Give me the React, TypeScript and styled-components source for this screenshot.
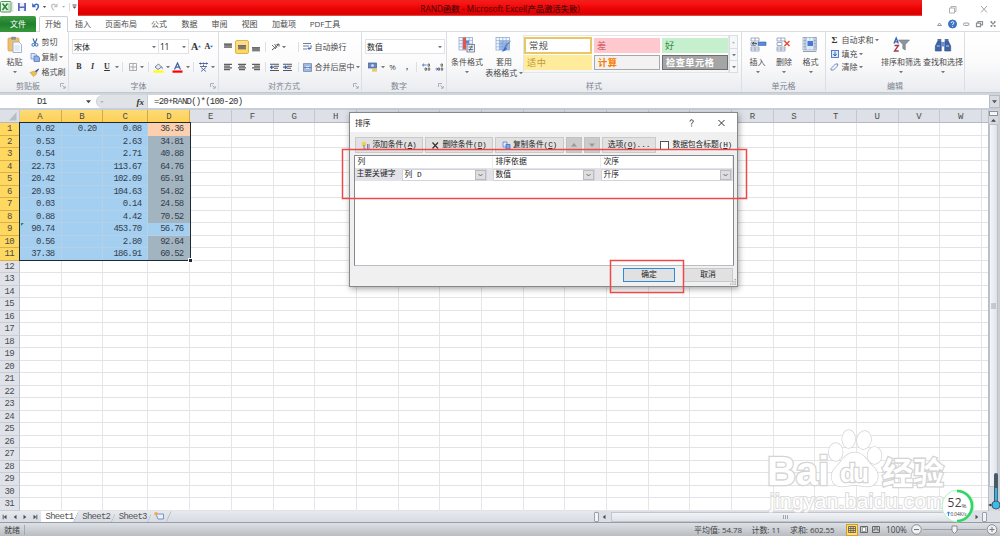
import React from "react";
import styled, { createGlobalStyle, css } from "styled-components";

const UI = '"Open Sans","Noto Sans CJK SC",sans-serif';
const MONO = '"Liberation Mono","Noto Sans CJK SC",monospace';

const Global = createGlobalStyle`
  *{box-sizing:border-box}
  html,body{margin:0;padding:0}
  body{width:1000px;height:536px;overflow:hidden;background:#fff;font:8px/10px ${UI};color:#4a4a4a}
  svg{display:block;flex:none}
`;

const Window = styled.div`
  position: relative;
  width: 1000px;
  height: 536px;
  overflow: hidden;
  display: flex;
  flex-direction: column;
  white-space: nowrap;
`;

/* ---------- title and tabs ---------- */
const TitleRow = styled.div`
  height: 16px;
  flex: none;
  display: flex;
  align-items: stretch;
`;
const QuickBar = styled.div`
  width: 78px;
  display: flex;
  align-items: center;
`;
const RedBar = styled.div`
  width: 844px;
  height: 16px;
  background: linear-gradient(#ee2020 0, #fa1414 20%, #e80404 55%, #dc0000 90%, #e96060);
  color: #4a0505;
  display: flex;
  align-items: center;
  justify-content: center;
  padding-top: 1px;
  font-size: 8.3px;
  font-weight: 500;
`;
const WinButtons = styled.div`
  flex: 1;
  padding-left: 27px;
  display: flex;
  align-items: flex-end;
  gap: 23px;
`;
const TabRow = styled.div`
  height: 16px;
  flex: none;
  display: flex;
  border-bottom: 1px solid #d9dce0;
`;
const FileTab = styled.div`
  width: 36px;
  height: 16px;
  border-radius: 1px 2px 0 0;
  background: linear-gradient(#3f9a45, #1f7f2c 50%, #37993b);
  color: #fff;
  text-align: center;
  line-height: 16px;
`;
const HomeTab = styled.div`
  width: 29px;
  margin-left: 2.5px;
  height: 16px;
  border: 1px solid #cdd1d6;
  border-bottom: 0;
  border-radius: 2px 2px 0 0;
  margin-bottom: -1px;
  background: #fff;
  text-align: center;
  line-height: 14px;
`;
const Tab = styled.div<{ $w: number }>`
  width: ${(p) => p.$w}px;
  text-align: center;
  line-height: 16px;
`;
const TabTools = styled.div`
  margin-left: auto;
  padding-right: 3px;
  display: flex;
  align-items: center;
`;

/* ---------- ribbon ---------- */
const Ribbon = styled.div`
  height: 61px;
  flex: none;
  display: flex;
  background: linear-gradient(#fff, #fbfbfc 50%, #e9ecef);
  border-bottom: 1px solid #c3c8ce;
`;
const Group = styled.div<{ $w: number }>`
  width: ${(p) => p.$w}px;
  height: 59px;
  flex: none;
  border-right: 1px solid #dbdee2;
  display: flex;
  flex-direction: column;
`;
const Body = styled.div<{ $pl?: number }>`
  height: 48px;
  display: flex;
  padding-left: ${(p) => p.$pl ?? 0}px;
`;
const Caption = styled.div<{ $shift?: number }>`
  height: 11px;
  display: grid;
  grid-template-columns: 12px 1fr 12px;
  align-items: center;
  text-align: center;
  color: #7b8390;
  & > span {
    grid-column: 2;
    transform: translateX(${(p) => p.$shift ?? 0}px);
  }
  & > svg {
    margin-left: 4px;
  }
`;
const BigButton = styled.div<{ $w: number }>`
  width: ${(p) => p.$w}px;
  flex: none;
  padding-top: 4px;
  display: flex;
  flex-direction: column;
  align-items: center;
  & > span {
    height: 10px;
    margin-top: 4px;
    line-height: 10px;
  }
  & > span + span {
    margin-top: 0.5px;
  }
`;
const ArrowSlot = styled.div`
  height: 9px;
  display: flex;
  align-items: center;
`;
const SmallList = styled.div<{ $step: number; $top: number; $w?: string }>`
  width: ${(p) => p.$w ?? "auto"};
  padding-top: ${(p) => p.$top}px;
  display: grid;
  grid-auto-rows: ${(p) => p.$step}px;
  align-items: center;
  align-content: start;
`;
const SmallItem = styled.div`
  display: flex;
  align-items: center;
  gap: 1.5px;
  line-height: 10px;
`;
const Rows = styled.div`
  display: flex;
  flex-direction: column;
  padding-top: 7px;
  gap: 5.5px;
`;
const ToolRow = styled.div`
  height: 15px;
  display: flex;
  align-items: center;
`;
const Slot = styled.div<{ $w: number; $on?: boolean }>`
  width: ${(p) => p.$w}px;
  height: 14px;
  flex: none;
  display: flex;
  align-items: center;
  justify-content: center;
  ${(p) =>
    p.$on &&
    css`
      background: linear-gradient(#fbe08a, #ffd657);
      border: 1px solid #dcb350;
      border-radius: 2px;
    `}
`;
const Divider = styled.i<{ $w: number }>`
  width: ${(p) => p.$w}px;
  height: 10px;
  flex: none;
  background: linear-gradient(#dcdfe3, #dcdfe3) center / 1px 100% no-repeat;
`;
const Glyph = styled.b<{ $size?: number; $italic?: boolean; $line?: boolean }>`
  font: ${(p) => (p.$italic ? "italic" : "normal")} 700 ${(p) => p.$size ?? 8}px/10px "Liberation Serif", serif;
  color: #333;
  text-decoration: ${(p) => (p.$line ? "underline" : "none")};
`;
const Combo = styled.div<{ $w: number }>`
  width: ${(p) => p.$w}px;
  height: 15px;
  flex: none;
  border: 1px solid #dfe2e6;
  background: #fff;
  color: #222;
  display: flex;
  align-items: center;
  justify-content: space-between;
  padding: 0 2px 0 1px;
  & + & {
    border-left: 0;
    letter-spacing: -0.3px;
    font-size: 8.5px;
  }
`;
const Gallery = styled.div`
  width: 206px;
  height: 38px;
  margin-top: 3px;
  border: 1px solid #e3e5e8;
  padding: 1px 0 0 0;
  display: grid;
  grid-template-columns: 68px 66px 66px;
  grid-template-rows: 17px 15px;
  column-gap: 2px;
  row-gap: 1px;
  align-items: center;
`;
const StyleCell = styled.div<{ $bg: string; $fg: string; $border?: string; $tall?: boolean; $bold?: boolean }>`
  height: ${(p) => (p.$tall ? 17 : 14.5)}px;
  background: ${(p) => p.$bg};
  color: ${(p) => p.$fg};
  border: ${(p) => (p.$border ? p.$border : "0 solid")};
  padding-left: 3px;
  display: flex;
  align-items: center;
  font-size: 9.2px;
  font-weight: ${(p) => (p.$bold ? 700 : 400)};
  letter-spacing: 0.5px;
`;
const GalleryScroll = styled.div`
  width: 9px;
  height: 38px;
  margin-top: 3px;
  display: grid;
  grid-template-rows: 1fr 1fr 1fr;
  border: 1px solid #dadde1;
  background: #f6f7f8;
  & > div {
    display: flex;
    align-items: center;
    justify-content: center;
  }
  & > div + div {
    border-top: 1px solid #dadde1;
  }
`;

/* ---------- formula bar ---------- */
const FormulaBar = styled.div`
  height: 17px;
  flex: none;
  display: flex;
  border-top: 2px solid #d0d5dc;
  border-bottom: 2px solid #c9ced6;
  background: #fff;
  font: 9px/14px ${MONO};
  color: #333;
`;
const NameBox = styled.div`
  width: 96px;
  display: flex;
  align-items: center;
  padding: 0 5px 0 37px;
  justify-content: space-between;
  letter-spacing: -0.6px;
`;
const FxBox = styled.div`
  width: 52px;
  display: flex;
  align-items: center;
  justify-content: space-between;
  background: #dfe2e7;
  border-radius: 7px 0 0 7px;
  border: 1px solid #c9cdd3;
  border-width: 0 1px 0 1px;
  padding: 0 3px 0 3px;
  font: italic 700 9px/12px "Liberation Serif", serif;
`;
const Formula = styled.div`
  flex: 1;
  padding-left: 6px;
  letter-spacing: -0.75px;
`;
const Expand = styled.div`
  width: 11px;
  background: #d8dce2;
  border: 1px solid #b7bcc4;
  display: flex;
  align-items: center;
  justify-content: center;
`;

/* ---------- sheet ---------- */
const Work = styled.div`
  height: 401px;
  flex: none;
  display: flex;
  overflow: hidden;
`;
const Sheet = styled.div`
  width: 988px;
  overflow: hidden;
`;
const columns = "19.5px 42px 41.8px 45px 42.2px repeat(19,41.67px) 8px";
const HeadRow = styled.div`
  display: grid;
  grid-template-columns: ${columns};
  grid-template-rows: 13px;
  height: 13px;
  font: 9px/12px ${MONO};
`;
const HeadCell = styled.div<{ $on?: boolean }>`
  text-align: center;
  border-right: 1px solid ${(p) => (p.$on ? "#cfa94a" : "#c3c8d0")};
  border-bottom: 1px solid ${(p) => (p.$on ? "#b38b35" : "#b4b9c1")};
  background: ${(p) => (p.$on ? "linear-gradient(#fbdb78,#ffd056)" : "#dde1e7")};
  color: #4c4c4c;
  line-height: 14px;
`;
const Row = styled.div`
  display: grid;
  grid-template-columns: ${columns};
  grid-template-rows: 12.52px;
  height: 12.52px;
  font: 9px/12px ${MONO};
`;
const RowHead = styled.div<{ $on?: boolean }>`
  overflow: hidden;
  text-align: center;
  letter-spacing: -0.75px;
  border-right: 1px solid ${(p) => (p.$on ? "#a5843a" : "#b9bec7")};
  border-bottom: 1px solid ${(p) => (p.$on ? "#dbb04c" : "#c9cdd5")};
  background: ${(p) => (p.$on ? "#ffd95f" : "#dfe3e9")};
  color: #4c4c4c;
`;
const Cell = styled.div<{ $bg?: string; $mark?: boolean }>`
  overflow: hidden;
  text-align: right;
  padding-right: 6px;
  letter-spacing: -0.75px;
  color: #34404c;
  border-right: 1px solid ${(p) => (!p.$bg ? "#e6e6e8" : p.$bg === "#a5cff0" ? "#b5d1e8" : p.$bg)};
  border-bottom: 1px solid ${(p) => (!p.$bg ? "#e3e3e5" : p.$bg === "#a5cff0" ? "#b5d1e8" : p.$bg)};
  background: ${(p) =>
    p.$mark
      ? `linear-gradient(135deg,#1b8f3c 2px,transparent 2.2px) 1px 0 no-repeat, ${p.$bg}`
      : p.$bg ?? "#fff"};
`;
const Selection = styled.div`
  position: absolute;
  left: 19px;
  top: 122px;
  width: 172px;
  height: 139px;
  border: 1.5px solid #1d2a36;
  &::after {
    content: "";
    position: absolute;
    right: -2px;
    bottom: -2px;
    width: 3px;
    height: 3px;
    background: #1d2a36;
    outline: 0.5px solid #fff;
  }
`;
const VScroll = styled.div`
  width: 12px;
  background: #d5dae1;
  border-left: 1px solid #b9bec6;
  border-right: 2px solid #c9ced5;
  display: flex;
  flex-direction: column;
  align-items: center;
`;
const VSplit = styled.div`
  width: 9px;
  height: 5px;
  margin-top: 1px;
  border: 1px solid #8d939c;
  background: #f5f6f8;
`;
const VThumb = styled.div`
  width: 9px;
  height: 363px;
  background: linear-gradient(90deg, #f4f6f8, #dfe3e9);
  border: 1px solid #bcc1c9;
  display: flex;
  align-items: center;
  justify-content: center;
`;
const VButton = styled.div`
  height: 8px;
  display: flex;
  align-items: center;
`;

/* ---------- bottom bars ---------- */
const TabsBar = styled.div`
  height: 12px;
  flex: none;
  display: flex;
  background: linear-gradient(#e6e9ee, #d8dce3);
  border-bottom: 1px solid #969ca5;
  font: 9px/12px ${MONO};
`;
const NavButtons = styled.div`
  width: 41px;
  display: flex;
  align-items: center;
`;
const SheetTab = styled.div<{ $on?: boolean }>`
  width: ${(p) => (p.$on ? 37 : 36.5)}px;
  text-align: center;
  letter-spacing: -0.72px;
  color: #555;
  background: ${(p) =>
    p.$on
      ? "linear-gradient(115deg,#fff 88%,#b1b7c0 89%,transparent 91%)"
      : "linear-gradient(115deg,transparent 90%,#b1b7c0 91%,transparent 93%)"};
`;
const HBar = styled.div`
  width: 406px;
  margin-left: auto;
  display: flex;
  align-items: center;
  background: #dce0e6;
`;
const HThumb = styled.div`
  width: 348px;
  height: 10px;
  margin-left: 2px;
  border: 1px solid #c2c7cf;
  background: linear-gradient(#f1f3f6, #dde1e7);
  display: flex;
  align-items: center;
  justify-content: center;
`;
const Splitter = styled.div`
  width: 5px;
  height: 10px;
  border: 1px solid #9ba1aa;
  background: #f1f3f5;
  border-radius: 1px;
`;
const StatusBar = styled.div`
  height: 13px;
  flex: 1;
  display: flex;
  align-items: center;
  background: linear-gradient(#dde0e4, #b9bdc2);
  color: #444;
`;
const Ready = styled.div`
  width: 25px;
  padding-left: 4px;
  border-right: 1px solid #a5a9af;
`;
const Stats = styled.div`
  margin-left: 669px;
  width: 150px;
  display: flex;
  gap: 9.5px;
  font-size: 8px;
  letter-spacing: -0.06px;
`;
const ViewButton = styled.div<{ $on?: boolean }>`
  width: 12px;
  height: 12px;
  display: flex;
  align-items: center;
  justify-content: center;
  background: ${(p) => (p.$on ? "#ffdb70" : "transparent")};
  border: 1px solid ${(p) => (p.$on ? "#d29e2d" : "transparent")};
`;
const Zoom = styled.div`
  width: 29px;
  text-align: center;
  font-size: 8.2px;
`;

/* ---------- dialog ---------- */
const Dialog = styled.div`
  position: absolute;
  left: 349px;
  top: 112px;
  width: 389px;
  height: 175px;
  border: 1px solid #85888c;
  background: #f0f0f0;
  box-shadow: 1px 2px 6px rgba(0, 0, 0, 0.35);
  display: flex;
  flex-direction: column;
  font: 7.8px/10px ${MONO};
  color: #222;
`;
const DialogTitle = styled.div`
  height: 19px;
  background: #fff;
  display: flex;
  align-items: center;
  padding: 0 11px 0 5px;
  font-family: ${UI};
  & > span {
    flex: 1;
  }
`;
const DialogTools = styled.div`
  height: 23px;
  padding: 5px 0 0 5px;
  display: flex;
  align-items: flex-start;
`;
const DButton = styled.div<{ $w: number; $off?: boolean }>`
  width: ${(p) => p.$w}px;
  height: 16px;
  margin-right: 2px;
  background: ${(p) => (p.$off ? "#cbcbcb" : "#e1e1e1")};
  border: 1px solid ${(p) => (p.$off ? "#c2c2c2" : "#cacaca")};
  display: flex;
  align-items: center;
  justify-content: center;
  gap: 2px;
`;
const Tight = styled.span`
  letter-spacing: -0.12px;
  & > u {
    letter-spacing: -0.3px;
  }
`;
const Check = styled.div`
  display: flex;
  align-items: center;
  height: 16px;
  gap: 3.5px;
  margin-left: 2px;
  & > i {
    width: 9px;
    height: 9px;
    border: 1px solid #555;
    background: #fff;
  }
`;
const List = styled.div`
  width: 380px;
  height: 111px;
  margin-left: 4px;
  border: 1px solid #85898f;
  border-bottom-color: #b9bcc2;
  background: #fff;
`;
const ListHead = styled.div`
  height: 12px;
  display: grid;
  grid-template-columns: 138px 108px 1fr;
  & > span {
    padding-left: 2.5px;
    line-height: 12px;
    border-right: 1px solid #ececf0;
  }
`;
const ListRow = styled.div`
  height: 13px;
  display: grid;
  grid-template-columns: 47px 91px 108px 1fr;
  align-items: center;
  background: #e3e2e9;
  & > span {
    padding-left: 1.5px;
    line-height: 10px;
    margin-top: -2px;
  }
`;
const Select = styled.div<{ $w: number }>`
  width: ${(p) => p.$w}px;
  height: 12px;
  border: 1px solid #d2d2da;
  background: #fff;
  display: flex;
  justify-content: space-between;
  align-items: center;
  padding-left: 1.5px;
  & > i {
    width: 11px;
    height: 10px;
    background: #dedee0;
    border: 1px solid #bcbcc0;
    display: flex;
    align-items: center;
    justify-content: center;
  }
`;
const DialogFoot = styled.div`
  flex: 1;
  display: flex;
  justify-content: flex-end;
  align-items: flex-start;
  padding: 2px 4px 0 0;
`;
const FootButton = styled.div<{ $w: number; $main?: boolean }>`
  width: ${(p) => p.$w}px;
  height: 14px;
  background: #e1e1e1;
  border: ${(p) => (p.$main ? "1.5px solid #2f8ad8" : "1px solid #c9c9c9")};
  margin-right: ${(p) => (p.$main ? 8 : 0)}px;
  text-align: center;
  line-height: 12px;
`;
const Grip = styled.div`
  position: absolute;
  right: 1px;
  bottom: 1px;
`;

const Frame = styled.div<{ $x: number; $y: number; $w: number; $h: number }>`
  position: absolute;
  left: ${(p) => p.$x}px;
  top: ${(p) => p.$y}px;
  width: ${(p) => p.$w}px;
  height: ${(p) => p.$h}px;
  border: 1px solid #f04646;
  box-shadow: 0 0 0 0.5px rgba(240, 80, 80, 0.5), inset 0 0 0 0.5px rgba(240, 80, 80, 0.5);
`;
const Overlay = styled.div<{ $x: number; $y: number }>`
  position: absolute;
  left: ${(p) => p.$x}px;
  top: ${(p) => p.$y}px;
`;

/* ---------- drawings ---------- */
const Down = ({ s = 4, c = "#777" }: { s?: number; c?: string }) => (
  <svg width={s} height={s} viewBox="0 0 4 4"><path d="M0 1h4L2 3.3z" fill={c} /></svg>
);
const Up = ({ s = 4, c = "#777" }: { s?: number; c?: string }) => (
  <svg width={s} height={s} viewBox="0 0 4 4"><path d="M0 3h4L2 .7z" fill={c} /></svg>
);
const Side = ({ left, bar, w = 10 }: { left?: boolean; bar?: boolean; w?: number }) => (
  <svg width={w} height="8" viewBox="-5 -4 10 8">
    <g transform={left ? "scale(-1,1)" : undefined} fill="#4a4f57">
      <path d="M-1.5-2.3L1.3 0l-2.8 2.3z" />
      {bar && <rect x="1.4" y="-2.3" width=".9" height="4.6" />}
    </g>
  </svg>
);
const Launcher = () => (
  <svg width="6" height="6" viewBox="0 0 6 6" fill="none" stroke="#9aa0a8" strokeWidth=".8">
    <path d="M.5 4V.5H4M2.3 2.3l2.6 2.6M5.2 3v2.2H3" />
  </svg>
);
const Lines = ({ kind }: { kind: "left" | "center" | "right" }) => {
  const x = kind === "left" ? 0 : kind === "center" ? 1 : 2;
  return (
    <svg width="8" height="8" viewBox="0 0 8 8" fill="#5e5e5e">
      <path d={`M0 .8h8V2H0zM${x} 2.500h6v1.200H${x}zM0 4.300h8v1.200H0zM${x} 6h6v1.200H${x}z`} />
    </svg>
  );
};
const VAlign = ({ y }: { y: number }) => (
  <svg width="8" height="12" viewBox="0 0 8 12" fill="#6c6c6c">
    <path d={`M0 ${y}h8v4.200H0z`} opacity=".55" />
    <path d={`M0 ${y}h8v1.4H0zM.5 ${y + 1.8}h7v1h-7zM0 ${y + 3.2}h8v1H0z`} />
  </svg>
);
const Indent = ({ out }: { out?: boolean }) => (
  <svg width="9" height="9" viewBox="0 0 9 9">
    <path d="M0 1.2h9M4 3.2h5M4 5.2h4M0 7.5h9" stroke="#555" strokeWidth="1.1" />
    <path d={out ? "M4 4.2H1M2.2 2.6L.6 4.2l1.6 1.6" : "M0 4.2h3M2 2.6l1.6 1.6L2 5.8"} stroke="#2f62b5" fill="none" strokeWidth="1.2" />
  </svg>
);
const Grid = ({ extra, w = 18 }: { extra?: React.ReactNode; w?: number }) => (
  <svg width={w} height="17" viewBox="0 0 18 17">
    <rect x="1" y="1.5" width="13.5" height="12.5" fill="#f4f8fd" stroke="#8fabd2" strokeWidth=".8" />
    <path d="M4.4 1.5V14M7.8 1.5V14M11.2 1.5V14M1 4.6h13.5M1 7.7h13.5M1 10.8h13.5" stroke="#8fabd2" strokeWidth=".7" />
    {extra}
  </svg>
);
const Rows3 = ({ extra }: { extra: React.ReactNode }) => (
  <svg width="18" height="17" viewBox="0 0 18 17">
    <g fill="#fff" stroke="#8798b5" strokeWidth=".8">
      <path d="M2 2h8v3H2zM6 2v3M2 11h8v4H2zM6 11v4M2 13h8M2 6.5h5v3H2z" />
    </g>
    {extra}
  </svg>
);

const letters = "ABCDEFGHIJKLMNOPQRSTUVW".split("");
const columnKeys = [...letters, ""];
const data: string[][] = [
  ["0.02", "0.20", "0.08", "36.36"],
  ["0.53", "", "2.63", "34.81"],
  ["0.54", "", "2.71", "40.88"],
  ["22.73", "", "113.67", "64.76"],
  ["20.42", "", "102.09", "65.91"],
  ["20.93", "", "104.63", "54.82"],
  ["0.03", "", "0.14", "24.58"],
  ["0.88", "", "4.42", "70.52"],
  ["90.74", "", "453.70", "56.76"],
  ["0.56", "", "2.80", "92.64"],
  ["37.38", "", "186.91", "60.52"],
];
const cellColor = (r: number, c: number) => {
  if (r > 10 || c > 3) return undefined;
  if (c < 3 || r === 8) return "#a5cff0";
  return r === 0 ? "#fcd0ae" : "#a3b4c1";
};

const Title = () => (
  <TitleRow>
    <QuickBar>
      <svg width="78" height="16" viewBox="0 0 78 16">
        <rect x=".5" y="1.5" width="10.5" height="10.5" rx="1" fill="#eaf5ea" stroke="#4d9a57" />
        <path d="M2.5 3.5l5 6.5M7.5 3.5l-5 6.5" stroke="#2b8a3d" strokeWidth="1.7" />
        <path d="M9 3v8" stroke="#8cc495" />
        <path d="M12.8 2v10" stroke="#c9cbd0" strokeWidth=".7" />
        <path d="M18 3h8v8h-8z" fill="#5667c4" /><path d="M19.7 3h4.5v3.4h-4.5zM19.7 8h4.5v3h-4.5z" fill="#eef1fb" />
        <path d="M34 6c2-3 5-1.8 4.2 1.2-.3 1.3-1 2.3-2.2 3" stroke="#3b68c0" strokeWidth="1.5" fill="none" /><path d="M32.2 3v4.3h4z" fill="#3b68c0" />
        <path d="M42.8 6h3.4l-1.7 2z" fill="#555" />
        <path d="M56 6c-2-3-5-1.8-4.2 1.2.3 1.3 1 2.3 2.2 3" stroke="#c0c4ca" strokeWidth="1.3" fill="none" /><path d="M57.5 3v4.3h-4z" fill="#c0c4ca" />
        <path d="M62.2 6h2.8l-1.4 1.7z" fill="#aaa" />
        <path d="M69.5 3v8" stroke="#c9cbd0" strokeWidth=".7" /><path d="M72.5 4.6h4v1h-4zM72.5 6.500h4l-2 2.200z" fill="#555" />
      </svg>
    </QuickBar>
    <RedBar>RAND函数 - Microsoft Excel(产品激活失败)</RedBar>
    <WinButtons>
      <svg width="8" height="12" viewBox="0 0 8 12" fill="none" stroke="#a8a8a8" strokeWidth=".9"><path d="M.5 4h5v5h-5zM2 4V2.5h5v5H5.5" /></svg>
      <svg width="8" height="12" viewBox="0 0 8 12" stroke="#999" strokeWidth=".9"><path d="M1 2l6 6.5M7 2L1 8.500" /></svg>
    </WinButtons>
  </TitleRow>
);

const Tabs = () => (
  <TabRow>
    <FileTab>文件</FileTab>
    <HomeTab>开始</HomeTab>
    <Tab $w={31}>插入</Tab>
    <Tab $w={45}>页面布局</Tab>
    <Tab $w={31}>公式</Tab>
    <Tab $w={30}>数据</Tab>
    <Tab $w={30}>审阅</Tab>
    <Tab $w={30}>视图</Tab>
    <Tab $w={39}>加载项</Tab>
    <Tab $w={43}>PDF工具</Tab>
    <TabTools>
      <svg width="64" height="12" viewBox="0 0 64 12" fill="none" stroke="#8a8f98" strokeWidth=".9">
        <path d="M4.500 7.500L6.500 5l2 2.500z" />
        <circle cx="19.500" cy="6" r="4" fill="#3f78c9" stroke="#3567b0" />
        <path d="M18.200 5c0-2 2.800-1.800 2.600 0-.1.900-1.300 1-1.300 2M19.500 8v.8" stroke="#fff" />
        <rect x="30.500" y="5" width="5.500" height="2.400" rx="1" />
        <path d="M43.500 5.200h4v3.400h-4zM45 5.200V3.500h4.500v3.400h-2" strokeWidth="1.200" />
        <path d="M57.500 3.500l5 5M62.500 3.500l-5 5M57.500 3.500h1.700M61 3.500h1.500M57.500 8.500h1.700M61 8.500h1.500" strokeWidth="1.200" />
      </svg>
    </TabTools>
  </TabRow>
);

const ClipboardGroup = () => (
  <Group $w={69}>
    <Body>
      <BigButton $w={29}>
        <svg width="16" height="17" viewBox="0 0 16 17">
          <rect x="1" y="2" width="11" height="13" rx="1" fill="#f0c070" stroke="#d09a48" strokeWidth=".7" />
          <rect x="4" y=".7" width="5" height="3" rx="1" fill="#8b8f96" />
          <path d="M6 6h6l2.500 2.500V16.500H6z" fill="#f5f9ff" stroke="#8aa3c8" strokeWidth=".8" />
          <path d="M7.500 10h5M7.500 12h5M7.500 14h5" stroke="#b5c7e2" strokeWidth=".6" />
        </svg>
        <span>粘贴</span>
        <ArrowSlot><Down /></ArrowSlot>
      </BigButton>
      <SmallList $step={15} $top={2.5}>
        <SmallItem>
          <svg width="11" height="9" viewBox="0 0 11 9"><path d="M4 .5l2 5M8 .5l-2 5" stroke="#40638f" strokeWidth="1.100" /><circle cx="4.300" cy="6.800" r="1.400" fill="none" stroke="#2e6bc0" /><circle cx="7.600" cy="6.800" r="1.400" fill="none" stroke="#2e6bc0" /></svg>
          剪切
        </SmallItem>
        <SmallItem>
          <svg width="11" height="9" viewBox="0 0 11 9"><path d="M2 .5h4l1.500 1.500V6H2z" fill="#dce9fa" stroke="#6e91c9" strokeWidth=".8" /><path d="M5 3h4l1.500 1.500v4H5z" fill="#8fb0e6" stroke="#4f78bd" strokeWidth=".8" /></svg>
          复制 <Down />
        </SmallItem>
        <SmallItem>
          <svg width="11" height="9" viewBox="0 0 11 9"><path d="M6 3L9.500.5l.5 1L7 5z" fill="#40569a" /><path d="M1 4.500l4.500-1.500L8 5.500 4.500 8.500z" fill="#efc14c" stroke="#b6903e" strokeWidth=".5" /></svg>
          格式刷
        </SmallItem>
      </SmallList>
    </Body>
    <Caption $shift={-6}><span>剪贴板</span><Launcher /></Caption>
  </Group>
);

const FontGroup = () => (
  <Group $w={150}>
    <Body $pl={3}>
      <Rows>
        <ToolRow>
          <Combo $w={87}>宋体<Down /></Combo>
          <Combo $w={30}>11<Down /></Combo>
          <Slot $w={14}><Glyph $size={10}>A</Glyph><Up s={3} c="#3670c4" /></Slot>
          <Slot $w={12}><Glyph $size={8}>A</Glyph><Down s={3} c="#3670c4" /></Slot>
        </ToolRow>
        <ToolRow>
          <Slot $w={14}><Glyph>B</Glyph></Slot>
          <Slot $w={13}><Glyph $italic>I</Glyph></Slot>
          <Slot $w={16}><Glyph $line>U</Glyph></Slot>
          <Slot $w={4}><Down /></Slot>
          <Divider $w={7} />
          <Slot $w={14}><svg width="8" height="8" viewBox="0 0 8 8" fill="none" stroke="#999" strokeWidth=".8"><path d="M.5.5h7v7h-7zM4 .5v7M.5 4h7" /></svg></Slot>
          <Slot $w={4}><Down /></Slot>
          <Divider $w={8} />
          <Slot $w={13}><svg width="11" height="11" viewBox="0 0 11 11"><path d="M2 5l3.500-3 3 3-3.500 2.500z" fill="#e8edf5" stroke="#567" strokeWidth=".8" /><path d="M8.500 4q1.500 1 1 3.500-1.500-1-1-3.500" fill="#3b72c6" /><rect x=".5" y="8.500" width="10" height="2.200" fill="#ff0" /></svg></Slot>
          <Slot $w={5}><Down /></Slot>
          <Slot $w={15}><svg width="11" height="11" viewBox="0 0 11 11"><path d="M2.500 7.500L5.500 1l3 6.500M3.600 5.200h3.800" fill="none" stroke="#3e5f9c" strokeWidth="1.200" /><rect x=".5" y="8.500" width="10" height="2.200" fill="#f00" /></svg></Slot>
          <Slot $w={5}><Down /></Slot>
          <Divider $w={7} />
          <Slot $w={13}><svg width="9" height="10" viewBox="0 0 9 10" fill="none" stroke="#4b5f96" strokeWidth=".9"><path d="M0 1.500h9M1.500.5v2M4.500.5v2M7.500.5v2M1 4.500h7M2 5.500l5 4M7 5.500l-5 4M4.500 3v1.500" /></svg></Slot>
          <Slot $w={5}><Down /></Slot>
        </ToolRow>
      </Rows>
    </Body>
    <Caption $shift={-5}><span>字体</span><Launcher /></Caption>
  </Group>
);

const AlignGroup = () => (
  <Group $w={143}>
    <Body $pl={2}>
      <Rows>
        <ToolRow>
          <Slot $w={14}><VAlign y={2.5} /></Slot>
          <Slot $w={14} $on><VAlign y={4} /></Slot>
          <Slot $w={14}><VAlign y={6} /></Slot>
          <Divider $w={5} />
          <Slot $w={14}><svg width="9" height="8" viewBox="0 0 9 8" fill="none" stroke="#555"><path d="M1 7l6-5M5.500 1.500L8 1v2.500" /><path d="M1 2l4 4M3.500 1L6 5" strokeWidth=".8" /></svg></Slot>
          <Slot $w={4}><Down /></Slot>
          <Slot $w={8} />
          <Divider $w={8} />
          <SmallItem><Slot $w={11}><svg width="9" height="9" viewBox="0 0 9 9" fill="none" stroke="#6b7c9c"><path d="M0 1.500h8M0 4h6M0 7h4" /><path d="M8 3v3.500H5M6.500 5L5 6.500 6.500 8" stroke="#2f66bd" strokeWidth=".9" /></svg></Slot>自动换行</SmallItem>
        </ToolRow>
        <ToolRow>
          <Slot $w={14}><Lines kind="left" /></Slot>
          <Slot $w={14}><Lines kind="center" /></Slot>
          <Slot $w={14}><Lines kind="right" /></Slot>
          <Divider $w={5} />
          <Slot $w={13}><Indent out /></Slot>
          <Slot $w={13}><Indent /></Slot>
          <Divider $w={8} />
          <SmallItem><Slot $w={11}><svg width="9" height="9" viewBox="0 0 9 9"><path d="M.5.5h8v8h-8z" fill="#d9e5f7" stroke="#7388b0" strokeWidth=".8" /><path d="M1 4.500h7M2.500 3L1 4.500 2.500 6M6.500 3L8 4.500 6.500 6M.5 2h8M.5 7h8" fill="none" stroke="#3c66ad" strokeWidth=".7" /></svg></Slot>合并后居中 <Down /></SmallItem>
        </ToolRow>
      </Rows>
    </Body>
    <Caption $shift={-6}><span>对齐方式</span><Launcher /></Caption>
  </Group>
);

const Decimals = ({ more }: { more?: boolean }) => (
  <svg width="9" height="8" viewBox="0 0 9 8" fill="none" stroke="#555" strokeWidth=".8">
    <path d="M6 1v2.200h1.500V1zM3 5v2.200h1.500V5zM6.200 5v2.200h1.500V5z" />
    <path d={more ? "M4.500 2H.5M2 .6L.5 2 2 3.400" : "M.5 6H3M1.500 5L3 6 1.500 7.500"} stroke="#2f66bd" />
  </svg>
);

const NumberGroup = () => (
  <Group $w={85}>
    <Body $pl={3}>
      <Rows>
        <ToolRow><Combo $w={80}>数值<Down /></Combo></ToolRow>
        <ToolRow>
          <Slot $w={15}><svg width="10" height="10" viewBox="0 0 10 10"><rect x=".5" y="1" width="8" height="5" fill="#6a87c4" stroke="#3f5c9d" strokeWidth=".7" /><circle cx="4.500" cy="3.500" r="1.300" fill="#dfe8fa" /><path d="M4 6.500h5v1.200H4zM4 8.200h5v1.200H4z" fill="#e5b94b" /></svg></Slot>
          <Slot $w={5}><Down /></Slot>
          <Slot $w={15}>%</Slot>
          <Slot $w={14}><Glyph>,</Glyph></Slot>
          <Divider $w={5} />
          <Slot $w={14}><Decimals more /></Slot>
          <Slot $w={13}><Decimals /></Slot>
        </ToolRow>
      </Rows>
    </Body>
    <Caption $shift={-5}><span>数字</span><Launcher /></Caption>
  </Group>
);

const StyleGroup = () => (
  <Group $w={295}>
    <Body $pl={2}>
      <BigButton $w={36}>
        <Grid extra={<><path d="M5 1.500h3v12H5z" fill="#e2564e" /><path d="M8 4.600h3v3H8z" fill="#5b86d6" /><rect x="9" y="8.500" width="7.500" height="7.500" fill="#e6eaf0" stroke="#677489" strokeWidth=".8" /><path d="M10.500 11h4.500M10.500 13.500h4.500M14 9.500l-2.500 5.500" stroke="#4d5a70" strokeWidth=".8" /></>} />
        <span>条件格式</span>
        <ArrowSlot><Down /></ArrowSlot>
      </BigButton>
      <BigButton $w={38}>
        <Grid extra={<><path d="M4.400 4.600h10v9.400h-10z" fill="#6f9ae0" opacity=".65" /><path d="M16.500 4L11 11l-1.500-1.200z" fill="#707c8e" /><path d="M10 10.500l2 1.700q-1.500 3.500-5.500 3.300 2-1.500 3.500-5" fill="#3d6fc4" /></>} />
        <span>套用</span>
        <span><SmallItem>表格格式 <Down /></SmallItem></span>
      </BigButton>
      <Gallery>
        <StyleCell $tall $bg="#fff" $fg="#555" $border="2px solid #e9c766">常规</StyleCell>
        <StyleCell $bg="#ffc7ce" $fg="#d2606a">差</StyleCell>
        <StyleCell $bg="#c6efce" $fg="#3a8a48">好</StyleCell>
        <StyleCell $bg="#ffeb9c" $fg="#c29a3a">适中</StyleCell>
        <StyleCell $bg="#f2f2f2" $fg="#fa7d00" $border="1px solid #a8a8a8" $bold>计算</StyleCell>
        <StyleCell $bg="#a5a5a5" $fg="#fff" $border="1.500px solid #6e6e6e" $bold>检查单元格</StyleCell>
      </Gallery>
      <GalleryScroll>
        <div><Up s={3} c="#aaa" /></div>
        <div><Down /></div>
        <div><Down s={4} /></div>
      </GalleryScroll>
    </Body>
    <Caption><span>样式</span></Caption>
  </Group>
);

const CellsGroup = () => (
  <Group $w={84}>
    <Body $pl={2}>
      <BigButton $w={27}>
        <Rows3 extra={<><path d="M9 6h8v3.500H9z" fill="#5c88d8" stroke="#3a64b0" strokeWidth=".6" /><path d="M8 7.700H3.500M5 6L3.300 7.700 5 9.400" stroke="#333" fill="none" strokeWidth=".9" /></>} />
        <span>插入</span><ArrowSlot><Down /></ArrowSlot>
      </BigButton>
      <BigButton $w={26}>
        <Rows3 extra={<path d="M9.500 5l5 5M14.500 5l-5 5" stroke="#ea4b33" strokeWidth="1.500" />} />
        <span>删除</span><ArrowSlot><Down /></ArrowSlot>
      </BigButton>
      <BigButton $w={27}>
        <Grid extra={<><path d="M4.400 3.500h7v9h-7z" fill="#dce8f8" /><path d="M5.500 5h5.500v5H5.500z" fill="#4a78cf" /><path d="M1 15.500h13.500M3 1v13M13 1v13" stroke="#68778f" strokeWidth=".7" /></>} />
        <span>格式</span><ArrowSlot><Down /></ArrowSlot>
      </BigButton>
    </Body>
    <Caption><span>单元格</span></Caption>
  </Group>
);

const EditGroup = () => (
  <Group $w={139}>
    <Body $pl={3}>
      <SmallList $step={13.5} $top={1.5} $w="46.5px">
        <SmallItem><Slot $w={11}><Glyph $size={9}>Σ</Glyph></Slot>自动求和 <Down /></SmallItem>
        <SmallItem><Slot $w={11}><svg width="8" height="8" viewBox="0 0 8 8"><rect x=".5" y=".5" width="7" height="7" fill="#dfeafc" stroke="#4574c4" strokeWidth=".9" /><path d="M4 1.500v4M2.300 4L4 6l1.700-2" stroke="#2c62c0" fill="none" /></svg></Slot>填充 <Down /></SmallItem>
        <SmallItem><Slot $w={11}><svg width="9" height="8" viewBox="0 0 9 8"><path d="M1 5.500L5.500 1H8L7 3.500 3.500 7H1z" fill="#f3f6fc" stroke="#6280b5" strokeWidth=".9" /></svg></Slot>清除 <Down /></SmallItem>
      </SmallList>
      <BigButton $w={51}>
        <svg width="18" height="17" viewBox="0 0 18 17">
          <path d="M2 7.500L4.200 2l2.200 5.500M2.800 5.800h2.800" fill="none" stroke="#3c62ae" strokeWidth="1.300" />
          <path d="M2.500 9.500h4L2.500 15h4.200" fill="none" stroke="#a03a4b" strokeWidth="1.300" />
          <path d="M6.500 4h11l-4.200 4.500V14l-2.500-1.500v-4z" fill="#8d949e" stroke="#6f7781" strokeWidth=".6" />
        </svg>
        <span>排序和筛选</span><ArrowSlot><Down /></ArrowSlot>
      </BigButton>
      <BigButton $w={33}>
        <svg width="18" height="17" viewBox="0 0 18 17">
          <path d="M3.500 3h3.800v4H3.500zM10.700 3h3.800v4h-3.800z" fill="#52709f" />
          <path d="M3.500 5.500L1.300 10v5h6V6zM14.500 5.500L16.700 10v5h-6V6z" fill="#3f64a5" stroke="#2f4f87" strokeWidth=".6" />
          <path d="M7 6h4v4.500H7z" fill="#6e8fca" /><path d="M2.800 10h3M12 10h3" stroke="#c2d3f0" />
        </svg>
        <span>查找和选择</span><ArrowSlot><Down /></ArrowSlot>
      </BigButton>
    </Body>
    <Caption><span>编辑</span></Caption>
  </Group>
);

const Chevron = () => (
  <svg width="5" height="4" viewBox="0 0 5 4" fill="none" stroke="#555" strokeWidth=".8"><path d="M.5 1l2 2 2-2" /></svg>
);

const SortDialog = () => (
  <Dialog>
    <DialogTitle>
      <span>排序</span>
      <svg width="42" height="10" viewBox="0 0 42 10" fill="none" stroke="#333" strokeWidth="1">
        <path d="M6 3.500c0-2.400 3.400-2.200 3.200 0-.1 1.300-1.600 1.200-1.600 3M7.600 7.500v1" />
        <path d="M34.500 2l6 6M40.500 2l-6 6" />
      </svg>
    </DialogTitle>
    <DialogTools>
      <DButton $w={68}>
        <svg width="9" height="9" viewBox="0 0 9 9"><circle cx="3" cy="3" r="2.200" fill="#f3cf4a" /><path d="M3 4v4h2M6.500 3v5M8 3v5" stroke="#6279a8" fill="none" strokeWidth=".9" /></svg>
        <Tight>添加条件(<u>A</u>)</Tight>
      </DButton>
      <DButton $w={68}>
        <svg width="9" height="9" viewBox="0 0 9 9"><path d="M1.500 1.500l5.500 6M7 1.500l-5.500 6" stroke="#333" strokeWidth="1.200" /></svg>
        <Tight>删除条件(<u>D</u>)</Tight>
      </DButton>
      <DButton $w={69}>
        <svg width="9" height="9" viewBox="0 0 9 9"><path d="M1 1h4v5H1z" fill="#dce9fa" stroke="#5a82c9" strokeWidth=".8" /><path d="M4 3.500h4v4.500H4z" fill="#7fa4e4" stroke="#3f6dbb" strokeWidth=".8" /></svg>
        <Tight>复制条件(<u>C</u>)</Tight>
      </DButton>
      <DButton $w={16} $off><Up s={6} c="#999" /></DButton>
      <DButton $w={16} $off><Down s={6} c="#999" /></DButton>
      <DButton $w={54}><Tight>选项(<u>O</u>)...</Tight></DButton>
      <Check><i /><Tight>数据包含标题(<u>H</u>)</Tight></Check>
    </DialogTools>
    <List>
      <ListHead><span>列</span><span>排序依据</span><span>次序</span></ListHead>
      <ListRow>
        <span>主要关键字</span>
        <Select $w={85}>列 D<i><Chevron /></i></Select>
        <Select $w={102}>数值<i><Chevron /></i></Select>
        <Select $w={131}>升序<i><Chevron /></i></Select>
      </ListRow>
    </List>
    <DialogFoot>
      <FootButton $w={52} $main>确定</FootButton>
      <FootButton $w={50}>取消</FootButton>
    </DialogFoot>
    <Grip>
      <svg width="6" height="6" viewBox="0 0 6 6" fill="#aaa"><path d="M4.500 0H6v1.200H4.500zM2.300 2.300h1.400v1.200H2.300zM4.500 2.300H6v1.200H4.500zM0 4.600h1.400v1.200H0zM2.300 4.600h1.400v1.200H2.300zM4.500 4.600H6v1.200H4.500z" /></svg>
    </Grip>
  </Dialog>
);

const Watermark = () => (
  <Overlay $x={760} $y={425}>
    <svg width="195" height="95" viewBox="0 0 195 95">
      <g fill="#fff" stroke="#d4d4d4" strokeWidth="1.400" paintOrder="stroke" fontFamily="Liberation Sans, Noto Sans CJK SC, sans-serif">
        <ellipse cx="75.700" cy="27" rx="7" ry="9" />
        <ellipse cx="88.700" cy="14" rx="6.500" ry="9" />
        <ellipse cx="104" cy="15" rx="7" ry="9" transform="rotate(12 104 15)" />
        <ellipse cx="114.500" cy="30.500" rx="7" ry="8.500" />
        <path d="M95 27.500c9 0 12 9 18 14 8 7 6 20-6 20-4 0-8-1.500-12.500-1.500S86 61.500 82 61.500c-12 0-13-13-6-19.500 6-5.500 9-14.500 19-14.500z" />
        <text x="7" y="60" fontSize="40" fontWeight="700" textLength="62" strokeWidth="2.600">Bai</text>
        <text x="80" y="56.500" fontSize="26" fontWeight="700" textLength="29" strokeWidth="2.600">du</text>
        <text x="122" y="58.500" fontSize="31" fontWeight="700" textLength="62" strokeWidth="2.600">经验</text>
        <text x="10" y="83" fontSize="21" textLength="174" strokeWidth="2" stroke="#dcdcdc">jingyan.baidu.com</text>
      </g>
    </svg>
  </Overlay>
);

const App = () => (
  <>
    <Global />
    <Window>
      <Title />
      <Tabs />
      <Ribbon>
        <ClipboardGroup />
        <FontGroup />
        <AlignGroup />
        <NumberGroup />
        <StyleGroup />
        <CellsGroup />
        <EditGroup />
      </Ribbon>
      <FormulaBar>
        <NameBox>D1<Down s={5} c="#444" /></NameBox>
        <FxBox><Down s={4} c="#bbb" /><span>fx</span></FxBox>
        <Formula>=20+RAND()*(100-20)</Formula>
        <Expand><Down s={5} c="#555" /></Expand>
      </FormulaBar>
      <Work>
        <Sheet>
          <HeadRow>
            <HeadCell><svg width="18" height="12" viewBox="0 0 18 12"><path d="M16.500 2v8.500H9z" fill="#b7bdc8" /></svg></HeadCell>
            {columnKeys.map((l, i) => <HeadCell key={i} $on={i < 4}>{l}</HeadCell>)}
          </HeadRow>
          {Array.from({ length: 31 }, (_, r) => (
            <Row key={r}>
              <RowHead $on={r < 11}>{r + 1}</RowHead>
              {columnKeys.map((_, c) => (
                <Cell key={c} $bg={cellColor(r, c)} $mark={r === 8 && c === 0}>{data[r]?.[c]}</Cell>
              ))}
            </Row>
          ))}
        </Sheet>
        <VScroll>
          <VSplit />
          <VButton><Up s={5} c="#444" /></VButton>
          <VThumb><svg width="5" height="6" viewBox="0 0 5 6"><path d="M0 1h5M0 3h5M0 5h5" stroke="#8f959e" strokeWidth=".8" /></svg></VThumb>
        </VScroll>
      </Work>
      <TabsBar>
        <NavButtons><Side left bar /><Side left /><Side /><Side bar /></NavButtons>
        <SheetTab $on>Sheet1</SheetTab>
        <SheetTab>Sheet2</SheetTab>
        <SheetTab>Sheet3</SheetTab>
        <svg width="26" height="11" viewBox="0 0 26 11" fill="none">
          <path d="M15.500 10.500L20 .5" stroke="#b1b7c0" strokeWidth=".8" />
          <path d="M5 3h7.500v5H7z" fill="#e9f0fb" stroke="#7089bb" strokeWidth=".9" /><circle cx="5" cy="2.800" r="1.800" fill="#f0aa4e" />
        </svg>
        <HBar>
          <Splitter />
          <Side left w={10} />
          <HThumb><svg width="5" height="4" viewBox="0 0 5 4"><path d="M.5 0v4M2.500 0v4M4.500 0v4" stroke="#8f959e" strokeWidth=".8" /></svg></HThumb>
          <Slot $w={13} />
          <Side w={10} />
          <Splitter />
        </HBar>
      </TabsBar>
      <StatusBar>
        <Ready>就绪</Ready>
        <Stats><span>平均值: 54.78</span><span>计数: 11</span><span>求和: 602.55</span></Stats>
        <Slot $w={2} />
        <ViewButton $on><svg width="8" height="7" viewBox="0 0 8 7" fill="none" stroke="#555" strokeWidth=".8"><path d="M.5.5h7v6h-7zM2.800.5v6M5.200.5v6M.5 2.500h7M.5 4.500h7" /></svg></ViewButton>
        <ViewButton><svg width="8" height="7" viewBox="0 0 8 7" fill="none" stroke="#666"><path d="M.5.5h7v6h-7z" /><path d="M2.500 1.500h3v4h-3z" fill="#fff" strokeWidth=".5" /></svg></ViewButton>
        <ViewButton><svg width="8" height="7" viewBox="0 0 8 7" fill="none" stroke="#666"><path d="M.5.5h7v6h-7zM3 .5v3.500H.5M5 .5v3.500h2.500" /></svg></ViewButton>
        <Zoom>100%</Zoom>
        <svg width="88" height="13" viewBox="0 0 88 13" fill="none" stroke="#777">
          <circle cx="5.500" cy="6.500" r="4.800" fill="#f0f1f3" strokeWidth=".8" /><path d="M3 6.500h5" />
          <path d="M12 6.500h63" stroke="#90949a" strokeWidth=".8" />
          <path d="M41 3h5v5l-2.500 2.500L41 8z" fill="#f2f3f5" strokeWidth=".8" />
          <circle cx="81" cy="6.500" r="4.800" fill="#f0f1f3" strokeWidth=".8" /><path d="M78.500 6.500h5M81 4v5" />
        </svg>
      </StatusBar>

      <Selection />
      <SortDialog />
      <Frame $x={342} $y={149} $w={405} $h={50} />
      <Frame $x={610} $y={260} $w={74} $h={33} />
      <Watermark />
      <Overlay $x={940} $y={488}>
        <svg width="36" height="36" viewBox="0 0 36 36" fontFamily="Open Sans, sans-serif">
          <circle cx="18" cy="18" r="16" fill="#fff" stroke="#b9eec6" strokeWidth="1" />
          <path d="M17 3A15 15 0 1 1 17 33" fill="none" stroke="#2fd565" strokeWidth="2.600" />
          <text x="7.500" y="19" fontSize="12" fill="#444" textLength="14">52</text>
          <text x="21.500" y="19.500" fontSize="6" fill="#444">%</text>
          <path d="M8.500 28v-4M7 25.500l1.500-1.700 1.500 1.700" stroke="#2e8be6" fill="none" />
          <text x="10.500" y="27.800" fontSize="4.800" fill="#333" textLength="16">0.04K/s</text>
        </svg>
      </Overlay>
      <Overlay $x={988} $y={472}>
        <svg width="12" height="40" viewBox="0 0 12 40">
          <rect x="6" y="1" width="4" height="30" rx="2" fill="#4b5866" />
          <rect x="7" y="16" width="2.200" height="16" fill="#35b4ea" />
          <circle cx="8" cy="33" r="4" fill="#39bdf0" stroke="#4b5866" />
          <path d="M0 33l3.500-1.500v3z" fill="#333" />
        </svg>
      </Overlay>
    </Window>
  </>
);

export default App;
